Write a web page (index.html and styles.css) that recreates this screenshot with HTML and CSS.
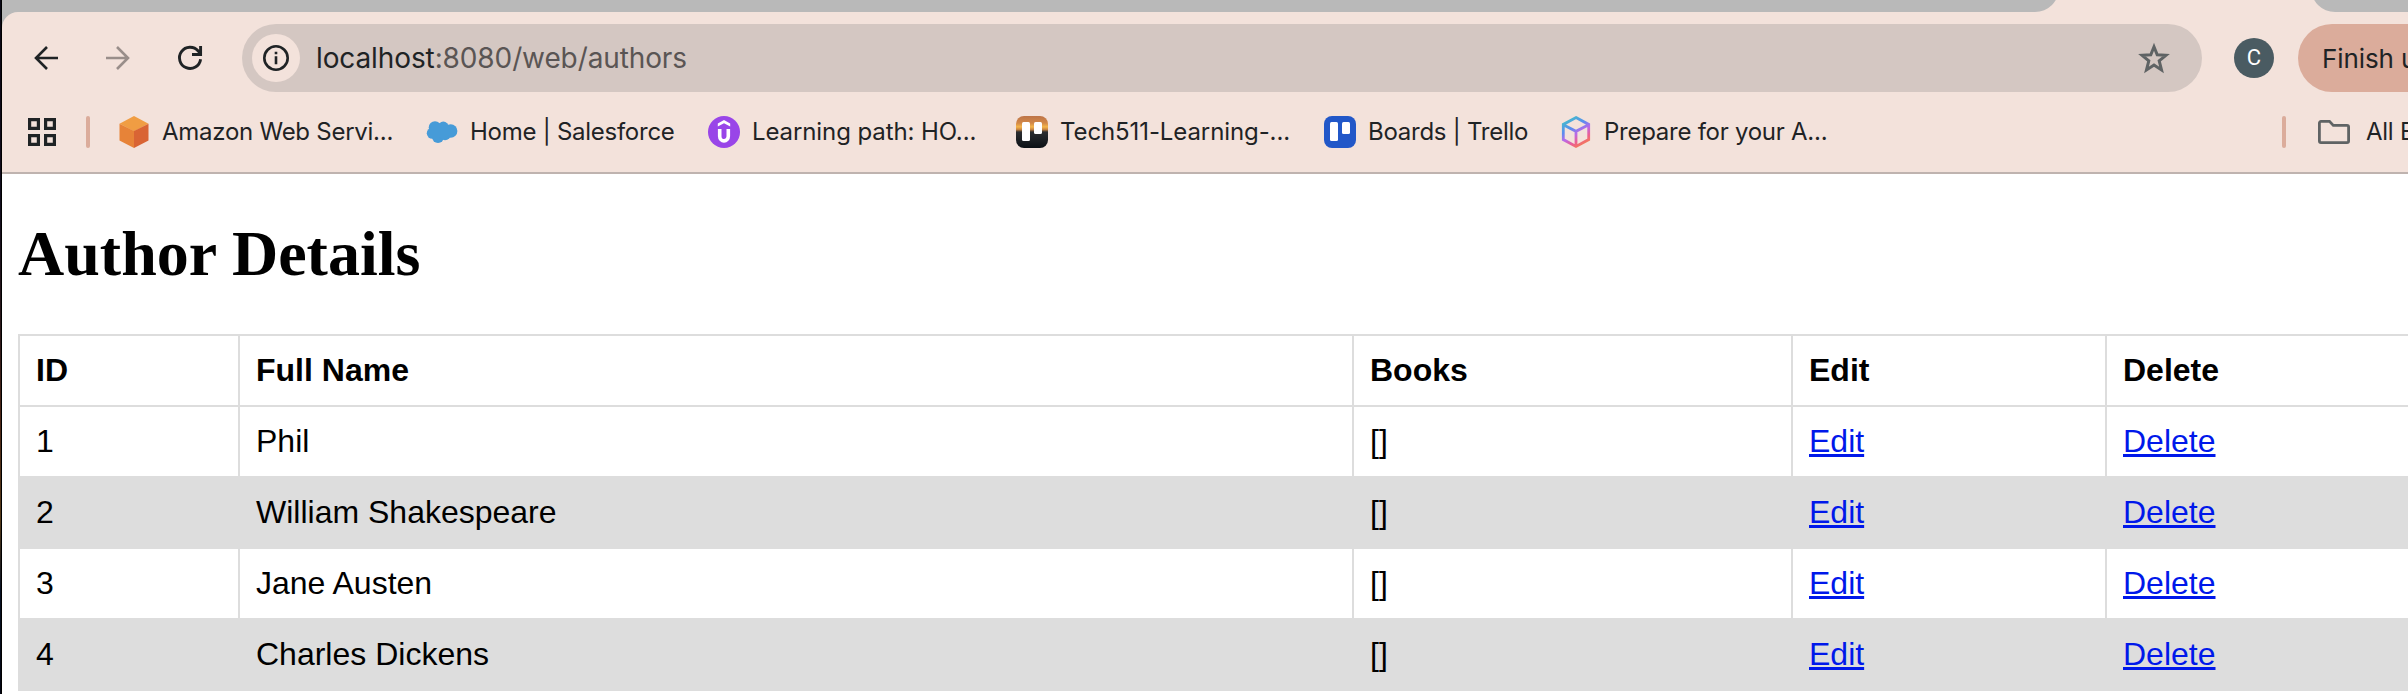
FILE: index.html
```html
<!DOCTYPE html>
<html lang="en">
<head>
<meta charset="utf-8">
<title>Author Details</title>
<link rel="stylesheet" href="styles.css">
</head>
<body>
<div class="desktop-edge"></div>
<div class="window">
  <div class="tabstrip"><div class="tabs-left"></div><div class="tabs-right"></div></div>
  <div class="chrome-wrap">
  <div class="chrome">
    <div class="toolbar">
      <svg class="nav back" viewBox="0 0 24 24" fill="none" stroke="#1f2325" stroke-width="2.6"><path d="M24 12H2.500M13 1L2 12l11 11"/></svg>
      <svg class="nav forward" viewBox="0 0 24 24" fill="none" stroke="#998e8a" stroke-width="2.600"><path d="M0 12H21.500M11 1L22 12l-11 11"/></svg>
      <svg class="nav reload" viewBox="0 0 24 24" fill="none" stroke="#1f2325" stroke-width="2.900"><path d="M22.600 13.200A10.600 10.600 0 1 1 20.200 5L22.600 8.200M22.600 0V8.500H14"/></svg>
      <div class="omnibox">
        <span class="site-info"><svg width="26" height="26" viewBox="0 0 26 26"><circle cx="13" cy="13" r="11.700" fill="none" stroke="#1f2325" stroke-width="2.600"/><path d="M13 11.300v8M13 6.800v2.400" stroke="#1f2325" stroke-width="2.600"/></svg></span>
        <span class="url"><span class="host">localhost</span>:8080/web/authors</span>
        <svg class="star" viewBox="0 0 32 30" fill="none" stroke="#5f6364" stroke-width="3"><path d="M16 3.800l3.200 7.900 8.800.6-6.800 5.600 2.300 9-7.500-4.900-7.500 4.900 2.300-9L4 12.300l8.800-.6z"/></svg>
      </div>
      <span class="avatar">C</span>
      <span class="finish">Finish update</span>
    </div>
    <div class="bookmarks">
      <svg class="apps" viewBox="0 0 28 28" fill="none" stroke="#1f2325" stroke-width="3.200"><path d="M1.600 1.600h8.800v8.800h-8.800zM17.600 1.600h8.800v8.800h-8.800zM1.600 17.600h8.800v8.800h-8.800zM17.600 17.600h8.800v8.800h-8.800z"/></svg>
      <span class="divider"></span>
      <span class="mark aws"><svg class="icon" viewBox="0 0 32 32"><path fill="#f09d43" d="M16 0l14.500 7.800L16 15.200 1.500 7.800z"/><path fill="#e78338" d="M1.500 7.800L16 15v17L1.500 24.500z"/><path fill="#d96434" d="M30.500 7.800L16 15v17l14.500-7.500z"/></svg><span class="label">Amazon Web Servi...</span></span>
      <span class="mark sf"><svg class="icon" viewBox="0 0 32 32" fill="#469bd8"><circle cx="9" cy="11.500" r="6.300"/><circle cx="17.300" cy="11" r="5.400"/><circle cx="24.700" cy="15" r="6.700"/><circle cx="6.400" cy="17.200" r="5.600"/><circle cx="12" cy="21" r="6"/><circle cx="19" cy="18.300" r="5.900"/><path d="M6 9h18v11H6z"/></svg><span class="label">Home | Salesforce</span></span>
      <span class="mark ud"><svg class="icon" viewBox="0 0 32 32"><circle cx="16" cy="16" r="16" fill="#9945e8"/><path fill="#fff" d="M16 4l6.200 3.500v3L16 7.200l-6.200 3.300v-3z"/><path fill="none" stroke="#fff" stroke-width="3.600" d="M11.700 13v7.300a4.300 4.600 0 0 0 8.600 0V13"/></svg><span class="label wide">Learning path: HO...</span></span>
      <span class="mark te"><svg class="icon" viewBox="0 0 32 32"><defs><linearGradient id="dusk" x2="0" y2="1"><stop offset="0" stop-color="#bd7448"/><stop offset=".22" stop-color="#d28847"/><stop offset=".34" stop-color="#f5b64b"/><stop offset=".42" stop-color="#c98540"/><stop offset=".5" stop-color="#2b2d30"/><stop offset="1" stop-color="#0b1015"/></linearGradient></defs><rect width="32" height="32" rx="8" fill="url(#dusk)"/><rect x="6" y="6" width="8" height="19" rx="1.500" fill="#fff"/><rect x="18" y="6" width="8" height="12" rx="1.500" fill="#fff"/></svg><span class="label wide">Tech511-Learning-...</span></span>
      <span class="mark tr"><svg class="icon" viewBox="0 0 32 32"><rect width="32" height="32" rx="8" fill="#2157c8"/><rect x="6" y="6" width="8" height="19" rx="1.500" fill="#fff"/><rect x="18" y="6" width="8" height="12" rx="1.500" fill="#fff"/></svg><span class="label">Boards | Trello</span></span>
      <span class="mark pr"><svg class="icon" viewBox="0 0 32 32"><defs><linearGradient id="prism" x1=".2" x2=".7" y2="1"><stop offset="0" stop-color="#42bfc9"/><stop offset=".35" stop-color="#5b8cf0"/><stop offset=".58" stop-color="#bb68e8"/><stop offset=".8" stop-color="#ec5f91"/><stop offset="1" stop-color="#f47b55"/></linearGradient></defs><path fill="none" stroke="url(#prism)" stroke-width="2.800" d="M16 1.500l12.700 6.900v15.200L16 30.500 3.300 23.600V8.400zM3.300 8.700L16 15.300l12.700-6.600M16 15.300v15"/></svg><span class="label">Prepare for your A...</span></span>
      <span class="divider"></span>
      <svg class="folder" viewBox="0 0 32 24" fill="none" stroke="#5f6364" stroke-width="2.800"><path d="M3 1.400h8.500l3.800 4H29a1.600 1.600 0 0 1 1.600 1.600v14A1.600 1.600 0 0 1 29 22.600H3A1.600 1.600 0 0 1 1.400 21V3A1.600 1.600 0 0 1 3 1.400z"/></svg>
      <span class="label all">All Bookmarks</span>
    </div>
  </div>
  </div>
  <main class="page">
    <h1>Author Details</h1>
    <table>
      <colgroup><col class="c-id"><col class="c-name"><col class="c-books"><col class="c-edit"><col class="c-delete"></colgroup>
      <tr><th>ID</th><th>Full Name</th><th>Books</th><th>Edit</th><th>Delete</th></tr>
      <tr><td>1</td><td>Phil</td><td>[]</td><td><a href="#">Edit</a></td><td><a href="#">Delete</a></td></tr>
      <tr><td>2</td><td>William Shakespeare</td><td>[]</td><td><a href="#">Edit</a></td><td><a href="#">Delete</a></td></tr>
      <tr><td>3</td><td>Jane Austen</td><td>[]</td><td><a href="#">Edit</a></td><td><a href="#">Delete</a></td></tr>
      <tr><td>4</td><td>Charles Dickens</td><td>[]</td><td><a href="#">Edit</a></td><td><a href="#">Delete</a></td></tr>
    </table>
  </main>
</div>
</body>
</html>
```
FILE: styles.css
```css
* { box-sizing: border-box; }
html, body { margin: 0; height: 694px; overflow: hidden; background: #fff; }
body { display: flex; font-family: Inter, "Liberation Sans", sans-serif; color: #1f2325; }
svg { display: block; flex: none; overflow: visible; }
.desktop-edge { flex: none; width: 2px; background: linear-gradient(#0a0816, #120d1d 30%, #2b1719 48%, #4a2415 60%, #533817 75%, #071022 85%, #030512); border-right: 1px solid #000; }
.window { flex: none; width: 2406px; overflow: hidden; }
.tabstrip { height: 12px; overflow: hidden; display: flex; align-items: flex-end; justify-content: space-between; background: #f3e2db; }
.tabs-left, .tabs-right { height: 48px; flex: none; background: #b9b9b9; }
.tabs-left { width: 2057px; border-bottom-right-radius: 24px; }
.tabs-right { width: 97px; border-bottom-left-radius: 24px; }
.chrome-wrap { background: #b9b9b9; }
.chrome { height: 162px; padding-top: 0; background: #f3e2db; border-bottom: 2px solid #bfb3af; border-top-left-radius: 16px; }
.toolbar { display: flex; align-items: center; height: 92px; padding-left: 32px; }
.nav { width: 24px; height: 24px; }
.forward, .reload { margin-left: 48px; }
.omnibox { width: 1960px; height: 68px; margin-left: 40px; border-radius: 34px; background: #d4c7c2; display: flex; align-items: center; padding: 0 32px 0 10px; flex: none; }
.site-info { width: 48px; height: 48px; border-radius: 50%; background: #f3e2db; display: flex; align-items: center; justify-content: center; }
.url { margin-left: 16px; font-size: 28px; line-height: 34px; letter-spacing: -0.11px; color: #5a5554; white-space: nowrap; }
.host { color: #1f2325; }
.star { width: 32px; height: 30px; margin-left: auto; }
.avatar { flex: none; width: 40px; height: 40px; margin-left: 32px; border-radius: 50%; background: #4a5b62; color: #fff; font: 22px/40px Roboto, sans-serif; text-align: center; }
.finish { flex: none; width: 220px; height: 68px; margin-left: 24px; padding-left: 24px; border-radius: 34px; background: #dbac9b; font-size: 26px; line-height: 70px; letter-spacing: -0.1px; white-space: nowrap; }
.bookmarks { display: flex; align-items: center; height: 32px; margin-top: 12px; padding-left: 26px; }
.apps { width: 28px; height: 28px; }
.divider { flex: none; width: 4px; height: 32px; margin-left: 30px; border-radius: 2px; background: #dbac9b; }
.mark { display: flex; align-items: center; gap: 12px; flex: none; width: 308px; }
.aws { margin-left: 28px; }
.sf { width: 282px; }
.tr { width: 236px; }
.pr { width: 692px; }
.icon { width: 32px; height: 32px; }
.label { font-size: 24px; line-height: 32px; letter-spacing: -0.26px; white-space: nowrap; }
.wide { letter-spacing: -0.1px; }
.folder { width: 32px; height: 24px; margin-left: 32px; }
.all { margin-left: 16px; }
.page { height: 520px; padding: 43px 0 0 16px; background: #fff; color: #000; }
h1 { margin: 0 0 43px; font: bold 64px/74px "Liberation Serif", serif; }
table { width: 2500px; table-layout: fixed; border-collapse: collapse; font: 32px/37px "Liberation Sans", Arial, sans-serif; }
.c-id { width: 220px; }
.c-name { width: 1114px; }
.c-books { width: 439px; }
.c-edit { width: 314px; }
th, td { height: 71px; padding: 16px; border: 2px solid #ddd; text-align: left; }
tr:nth-child(odd) td { background: #ddd; }
a { color: #0018ea; text-decoration: underline; text-decoration-thickness: 3px; }
```
